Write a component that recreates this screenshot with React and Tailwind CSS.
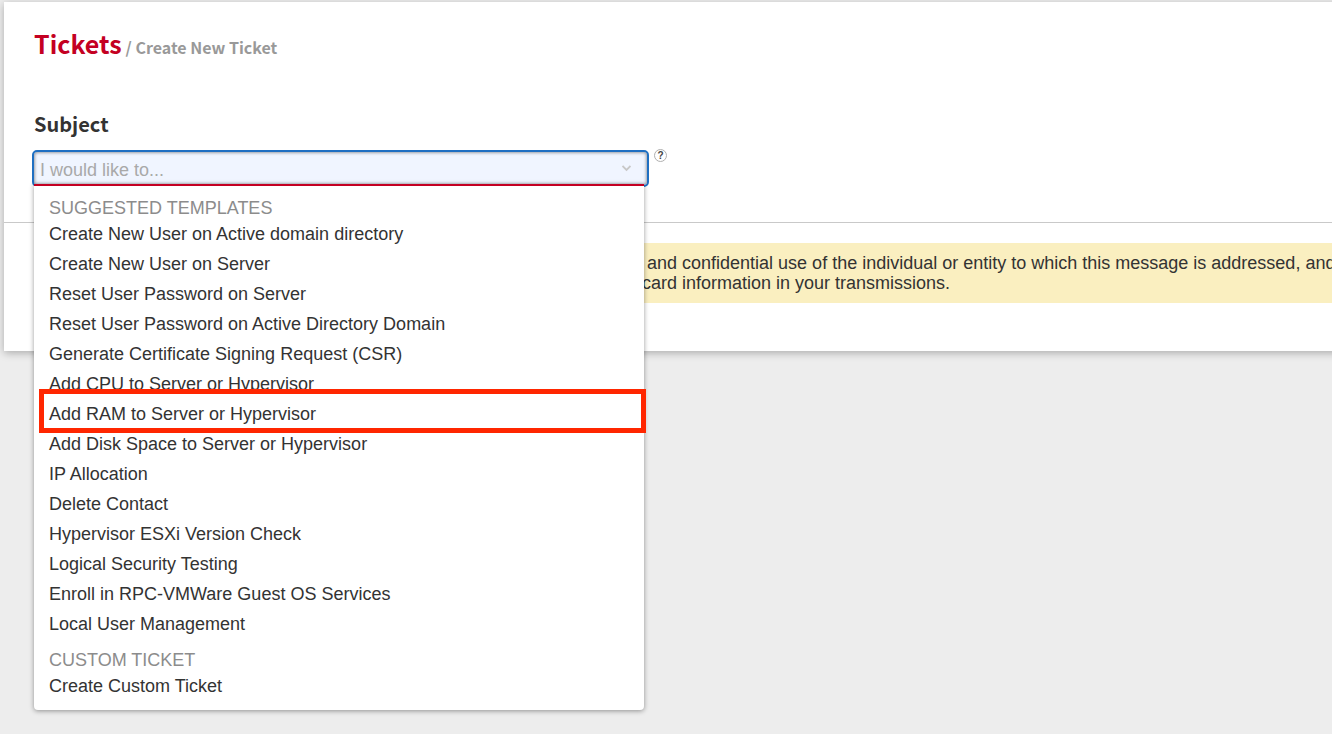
import { useState } from "react";

const groups = [
  {
    label: "SUGGESTED TEMPLATES",
    items: [
      "Create New User on Active domain directory",
      "Create New User on Server",
      "Reset User Password on Server",
      "Reset User Password on Active Directory Domain",
      "Generate Certificate Signing Request (CSR)",
      "Add CPU to Server or Hypervisor",
      "Add RAM to Server or Hypervisor",
      "Add Disk Space to Server or Hypervisor",
      "IP Allocation",
      "Delete Contact",
      "Hypervisor ESXi Version Check",
      "Logical Security Testing",
      "Enroll in RPC-VMWare Guest OS Services",
      "Local User Management",
    ],
  },
  { label: "CUSTOM TICKET", items: ["Create Custom Ticket"] },
];

const marked = "Add RAM to Server or Hypervisor";

function TemplateMenu({ onPick }) {
  return (
    <div className="absolute top-[34px] right-[5px] left-[2px] z-10 rounded-b border-t-2 border-[#c40022] bg-white pt-px pb-[9px] shadow-[0_1px_5px_rgba(0,0,0,0.4)]">
      {groups.map((group) => (
        <section key={group.label} className="pt-[10px]">
          <h3 className="px-[15px] leading-[22px] text-[#8c8c8c]">{group.label}</h3>
          <ul>
            {group.items.map((item) => (
              <li key={item} className="relative">
                <button
                  type="button"
                  onClick={() => onPick(item)}
                  className="block w-full px-[15px] text-left leading-[30px]"
                >
                  {item}
                </button>
                {item === marked && (
                  <span className="pointer-events-none absolute -top-[10px] -right-[2px] -bottom-[4px] left-[5px] z-10 border-5 border-[#ff2600]" />
                )}
              </li>
            ))}
          </ul>
        </section>
      ))}
    </div>
  );
}

export default function App() {
  const [subject, setSubject] = useState("");

  return (
    <div className="min-h-screen overflow-hidden bg-[#ededed] pt-[2px] pl-1 font-['Liberation_Sans',Arial,sans-serif] text-[18px] text-[#333333]">
      <main className="-mr-3 bg-white pb-12 shadow-[0_2px_8px_rgba(0,0,0,0.28)]">
        <header className="flex items-baseline gap-1 px-[30px] pt-[25px] font-['Noto_Sans_CJK_JP',sans-serif] font-bold">
          <h1 className="text-[25px] leading-8 text-[#c40022]">Tickets</h1>
          <p className="text-[16px] leading-8 text-[#999999]">/ Create New Ticket</p>
        </header>

        <div className="border-b border-[#c9c9c9] px-7 pt-[47px] pb-[35px]">
          <label
            htmlFor="subject"
            className="block px-[2px] font-['Noto_Sans_CJK_JP',sans-serif] text-[20px] leading-7 font-bold"
          >
            Subject
          </label>
          <div className="flex items-start gap-[5px] pt-3">
            <div className="relative w-[617px]">
              <input
                id="subject"
                type="text"
                value={subject}
                onChange={(event) => setSubject(event.target.value)}
                placeholder="I would like to..."
                className="block h-[37px] w-full rounded-[5px] border-2 border-[#1f6fc2] bg-[#f0f5ff] pt-1 pr-10 pl-[6px] shadow-[inset_0_0_3px_1px_rgba(0,0,0,0.35)] outline-none placeholder:text-[#a9a9a9]"
              />
              <svg
                className="pointer-events-none absolute top-[15px] right-[18px]"
                width="9"
                height="7"
                viewBox="0 0 9 7"
                fill="none"
                stroke="#c8c8c8"
                strokeWidth="1.8"
              >
                <path d="M0.5 1 L4.5 5 L8.5 1" />
              </svg>
              <TemplateMenu onPick={setSubject} />
            </div>
            <button
              type="button"
              aria-label="Subject help"
              className="-mt-px flex size-[13px] items-center justify-center rounded-full border border-[#b0b0b0] bg-white text-[10px] leading-none font-bold text-[#444444]"
            >
              ?
            </button>
          </div>
        </div>

        <div className="mt-5 ml-[30px] bg-[#faefc0] py-[10px] pl-[608px] leading-5 whitespace-nowrap">
          <p>&nbsp;and confidential use of the individual or entity to which this message is addressed, and</p>
          <p>card information in your transmissions.</p>
        </div>
      </main>
    </div>
  );
}
